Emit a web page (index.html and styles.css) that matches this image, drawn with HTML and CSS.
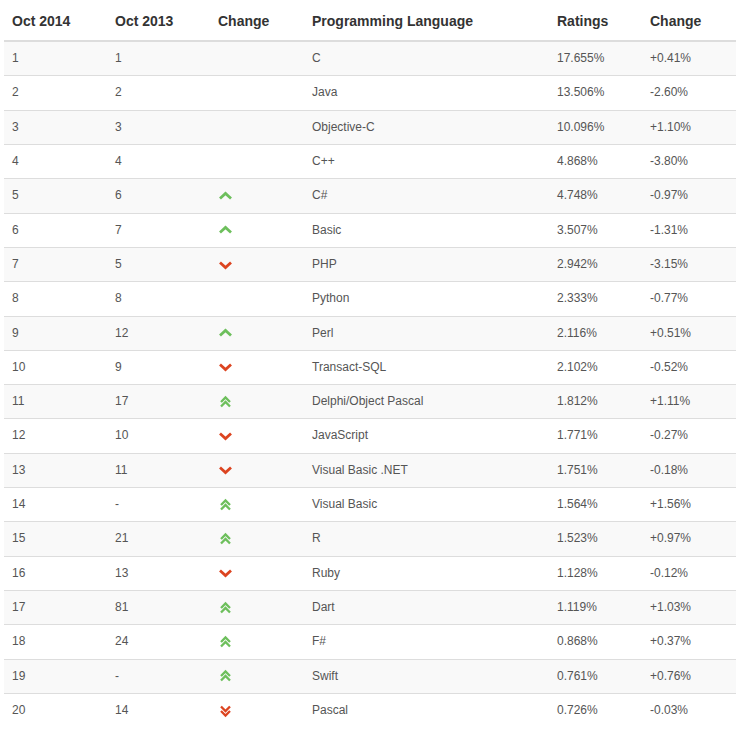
FILE: index.html
```html
<!DOCTYPE html>
<html>
<head>
<meta charset="utf-8">
<link rel="stylesheet" href="styles.css">
</head>
<body>
<table class="rank">
  <colgroup>
    <col class="c1"><col class="c2"><col class="c3"><col class="c4"><col class="c5"><col class="c6">
  </colgroup>
  <thead>
    <tr><th>Oct 2014</th><th>Oct 2013</th><th>Change</th><th>Programming Language</th><th>Ratings</th><th>Change</th></tr>
  </thead>
  <tbody>
    <tr><td>1</td><td>1</td><td></td><td>C</td><td>17.655%</td><td>+0.41%</td></tr>
    <tr><td>2</td><td>2</td><td></td><td>Java</td><td>13.506%</td><td>-2.60%</td></tr>
    <tr><td>3</td><td>3</td><td></td><td>Objective-C</td><td>10.096%</td><td>+1.10%</td></tr>
    <tr><td>4</td><td>4</td><td></td><td>C++</td><td>4.868%</td><td>-3.80%</td></tr>
    <tr><td>5</td><td>6</td><td><svg class="ic" width="16" height="10" viewBox="0 0 16 10"><polyline points="2,7.5 7.5,2.5 13,7.5" class="up"/></svg></td><td>C#</td><td>4.748%</td><td>-0.97%</td></tr>
    <tr><td>6</td><td>7</td><td><svg class="ic" width="16" height="10" viewBox="0 0 16 10"><polyline points="2,7.5 7.5,2.5 13,7.5" class="up"/></svg></td><td>Basic</td><td>3.507%</td><td>-1.31%</td></tr>
    <tr><td>7</td><td>5</td><td><svg class="ic" width="16" height="10" viewBox="0 0 16 10"><polyline points="2,2.5 7.5,7.5 13,2.5" class="dn"/></svg></td><td>PHP</td><td>2.942%</td><td>-3.15%</td></tr>
    <tr><td>8</td><td>8</td><td></td><td>Python</td><td>2.333%</td><td>-0.77%</td></tr>
    <tr><td>9</td><td>12</td><td><svg class="ic" width="16" height="10" viewBox="0 0 16 10"><polyline points="2,7.5 7.5,2.5 13,7.5" class="up"/></svg></td><td>Perl</td><td>2.116%</td><td>+0.51%</td></tr>
    <tr><td>10</td><td>9</td><td><svg class="ic" width="16" height="10" viewBox="0 0 16 10"><polyline points="2,2.5 7.5,7.5 13,2.5" class="dn"/></svg></td><td>Transact-SQL</td><td>2.102%</td><td>-0.52%</td></tr>
    <tr><td>11</td><td>17</td><td><svg class="ic" width="16" height="14" viewBox="0 0 16 14"><polyline points="3,7 7.5,2.5 12,7" class="up2"/><polyline points="3,11.5 7.5,7 12,11.5" class="up2"/></svg></td><td>Delphi/Object Pascal</td><td>1.812%</td><td>+1.11%</td></tr>
    <tr><td>12</td><td>10</td><td><svg class="ic" width="16" height="10" viewBox="0 0 16 10"><polyline points="2,2.5 7.5,7.5 13,2.5" class="dn"/></svg></td><td>JavaScript</td><td>1.771%</td><td>-0.27%</td></tr>
    <tr><td>13</td><td>11</td><td><svg class="ic" width="16" height="10" viewBox="0 0 16 10"><polyline points="2,2.5 7.5,7.5 13,2.5" class="dn"/></svg></td><td>Visual Basic .NET</td><td>1.751%</td><td>-0.18%</td></tr>
    <tr><td>14</td><td>-</td><td><svg class="ic" width="16" height="14" viewBox="0 0 16 14"><polyline points="3,7 7.5,2.5 12,7" class="up2"/><polyline points="3,11.5 7.5,7 12,11.5" class="up2"/></svg></td><td>Visual Basic</td><td>1.564%</td><td>+1.56%</td></tr>
    <tr><td>15</td><td>21</td><td><svg class="ic" width="16" height="14" viewBox="0 0 16 14"><polyline points="3,7 7.5,2.5 12,7" class="up2"/><polyline points="3,11.5 7.5,7 12,11.5" class="up2"/></svg></td><td>R</td><td>1.523%</td><td>+0.97%</td></tr>
    <tr><td>16</td><td>13</td><td><svg class="ic" width="16" height="10" viewBox="0 0 16 10"><polyline points="2,2.5 7.5,7.5 13,2.5" class="dn"/></svg></td><td>Ruby</td><td>1.128%</td><td>-0.12%</td></tr>
    <tr><td>17</td><td>81</td><td><svg class="ic" width="16" height="14" viewBox="0 0 16 14"><polyline points="3,7 7.5,2.5 12,7" class="up2"/><polyline points="3,11.5 7.5,7 12,11.5" class="up2"/></svg></td><td>Dart</td><td>1.119%</td><td>+1.03%</td></tr>
    <tr><td>18</td><td>24</td><td><svg class="ic" width="16" height="14" viewBox="0 0 16 14"><polyline points="3,7 7.5,2.5 12,7" class="up2"/><polyline points="3,11.5 7.5,7 12,11.5" class="up2"/></svg></td><td>F#</td><td>0.868%</td><td>+0.37%</td></tr>
    <tr><td>19</td><td>-</td><td><svg class="ic" width="16" height="14" viewBox="0 0 16 14"><polyline points="3,7 7.5,2.5 12,7" class="up2"/><polyline points="3,11.5 7.5,7 12,11.5" class="up2"/></svg></td><td>Swift</td><td>0.761%</td><td>+0.76%</td></tr>
    <tr><td>20</td><td>14</td><td><svg class="ic" width="16" height="14" viewBox="0 0 16 14"><polyline points="3,2.5 7.5,7 12,2.5" class="dn2"/><polyline points="3,7 7.5,11.5 12,7" class="dn2"/></svg></td><td>Pascal</td><td>0.726%</td><td>-0.03%</td></tr>
  </tbody>
</table>
</body>
</html>
```

FILE: styles.css
```css
html, body {
  margin: 0;
  padding: 0;
  background: #fff;
}
body {
  padding: 3px 3px 0 4px;
  font-family: "Liberation Sans", Arial, sans-serif;
}
.rank {
  width: 732px;
  border-collapse: collapse;
  border-spacing: 0;
  table-layout: fixed;
}
.c1 { width: 103px; }
.c2 { width: 103px; }
.c3 { width: 94px; }
.c4 { width: 245px; }
.c5 { width: 93px; }
.c6 { width: 94px; }
.rank th {
  text-align: left;
  font-size: 14px;
  font-weight: bold;
  line-height: 20px;
  color: #333;
  padding: 8px 8px 9px;
  border-bottom: 2px solid #ddd;
}
.rank td {
  font-size: 12px;
  line-height: 17.32px;
  color: #555;
  padding: 8px;
  border-top: 1px solid #ddd;
  vertical-align: middle;
}
.rank tbody tr:first-child td {
  border-top: 0;
}
.rank tbody tr:nth-child(odd) {
  background: #f9f9f9;
}
.ic {
  display: block;
}
.up, .up2 {
  fill: none;
  stroke: #6dbf5c;
  stroke-width: 2.8;
}
.dn, .dn2 {
  fill: none;
  stroke: #dc4420;
  stroke-width: 2.8;
}
.up2, .dn2 {
  stroke-width: 2.3;
}
```
